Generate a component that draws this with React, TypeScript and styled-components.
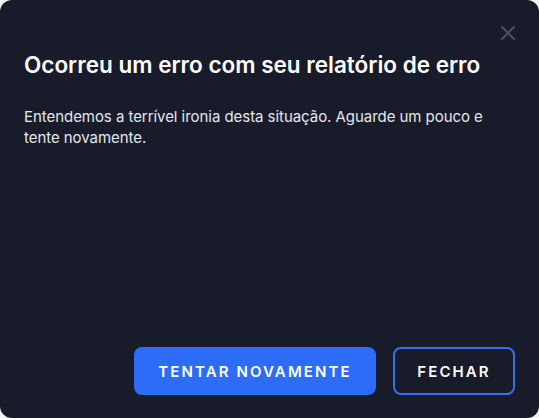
import React from 'react';
import styled, { createGlobalStyle } from 'styled-components';

const GlobalStyle = createGlobalStyle`
  html, body {
    margin: 0;
    padding: 0;
    background: #f2f3f5;
  }
  body {
    font-family: Inter, "Noto Sans", sans-serif;
  }
`;

const ModalContainer = styled.div`
  position: relative;
  width: 539px;
  height: 418px;
  box-sizing: border-box;
  background: #181c2a;
  border-radius: 12px;
  display: flex;
  flex-direction: column;
  padding: 50px 24px 23px 24px;
`;

const CloseIcon = styled.button`
  position: absolute;
  top: 23px;
  right: 21px;
  width: 20px;
  height: 20px;
  padding: 0;
  border: none;
  background: transparent;
  cursor: pointer;
  display: flex;
  align-items: center;
  justify-content: center;
`;

const Title = styled.h1`
  margin: 0;
  color: #ffffff;
  font-size: 22.5px;
  font-weight: 600;
  line-height: 30px;
`;

const Body = styled.p`
  margin: 26px 0 0 0;
  color: #e4e6ec;
  font-size: 15px;
  line-height: 21px;
  letter-spacing: -0.05px;
`;

const ModalFooter = styled.div`
  margin-top: auto;
  display: flex;
  justify-content: flex-end;
  gap: 17px;
`;

const Button = styled.button<{ $variant: 'primary' | 'secondary' }>`
  height: 48px;
  box-sizing: border-box;
  padding: 0 20px;
  border-radius: 8px;
  font-family: Inter, "Noto Sans", sans-serif;
  font-size: 15px;
  font-weight: 600;
  letter-spacing: 2.1px;
  text-transform: uppercase;
  color: #ffffff;
  cursor: pointer;
  background: ${(p) => (p.$variant === 'primary' ? '#2d6cf6' : '#181c2a')};
  border: ${(p) => (p.$variant === 'primary' ? 'none' : '2px solid #3670ea')};
  width: ${(p) => (p.$variant === 'primary' ? '242px' : '122px')};
`;

export default function App() {
  return (
    <>
      <GlobalStyle />
      <ModalContainer>
        <CloseIcon aria-label="Fechar">
          <svg width="16" height="16" viewBox="0 0 16 16">
            <path d="M2 2 L14 14 M14 2 L2 14" stroke="#4a4f61" strokeWidth="2.2" strokeLinecap="round" />
          </svg>
        </CloseIcon>
        <Title>Ocorreu um erro com seu relatório de erro</Title>
        <Body>
          Entendemos a terrível ironia desta situação. Aguarde um pouco e tente novamente.
        </Body>
        <ModalFooter>
          <Button $variant="primary">Tentar novamente</Button>
          <Button $variant="secondary">Fechar</Button>
        </ModalFooter>
      </ModalContainer>
    </>
  );
}
